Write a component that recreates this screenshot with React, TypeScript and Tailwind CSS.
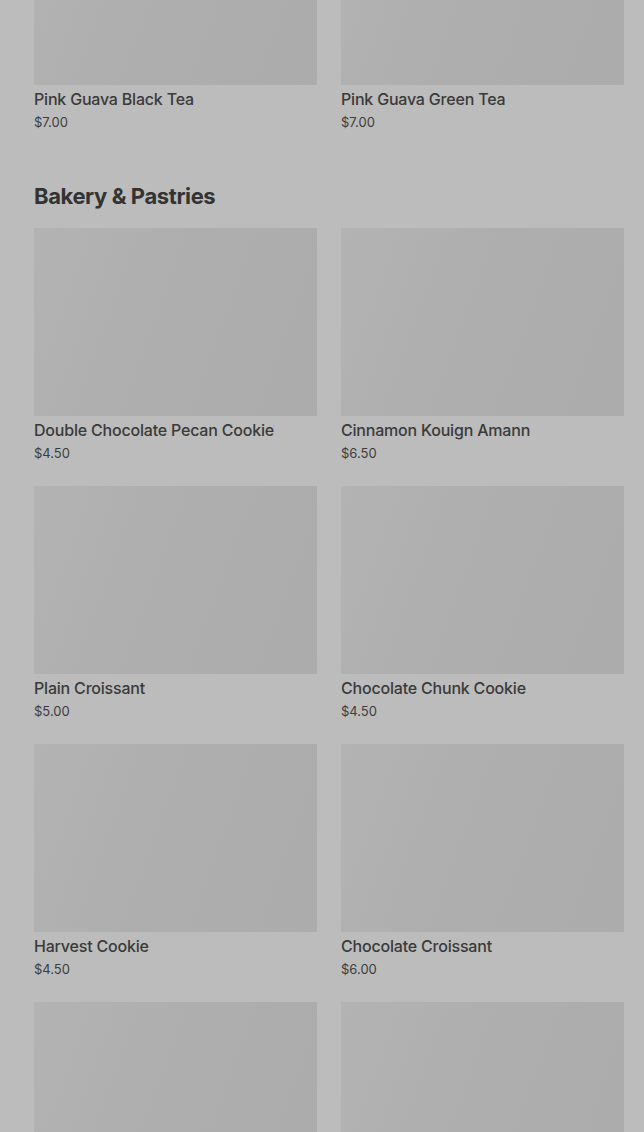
import React from "react";

type Item = { name: string; price: string };

const Card = ({ item }: { item?: Item }) => (
  <div className="flex flex-col">
    <div className="h-[188px] w-full bg-[linear-gradient(110deg,#b3b3b3_0%,#aeaeae_45%,#acacac_100%)]" />
    {item && (
      <>
        <div className="mt-[3px] text-[16px] leading-[22px] font-medium tracking-[-0.2px] text-[#3a3a3a]">{item.name}</div>
        <div className="mt-[2px] text-[13px] leading-[20px] text-[#3d3d3d]">{item.price}</div>
      </>
    )}
  </div>
);

const top: Item[] = [
  { name: "Pink Guava Black Tea", price: "$7.00" },
  { name: "Pink Guava Green Tea", price: "$7.00" },
];

const bakery: Item[] = [
  { name: "Double Chocolate Pecan Cookie", price: "$4.50" },
  { name: "Cinnamon Kouign Amann", price: "$6.50" },
  { name: "Plain Croissant", price: "$5.00" },
  { name: "Chocolate Chunk Cookie", price: "$4.50" },
  { name: "Harvest Cookie", price: "$4.50" },
  { name: "Chocolate Croissant", price: "$6.00" },
];

export default function App() {
  return (
    <div
      className="h-[1132px] w-[644px] overflow-hidden bg-[#bcbcbc]"
      style={{ fontFamily: "Inter, 'Noto Sans', sans-serif" }}
    >
      <div className="mt-[-103px] pl-[34px] pr-[20px]">
        <div className="grid grid-cols-2 gap-x-[24px] gap-y-[23px]">
          {top.map((it) => (
            <Card key={it.name} item={it} />
          ))}
        </div>
        <h2 className="mt-[50px] mb-[18px] text-[22px] leading-[28px] font-bold tracking-[-0.4px] text-[#333333]">
          Bakery &amp; Pastries
        </h2>
        <div className="grid grid-cols-2 gap-x-[24px] gap-y-[23px]">
          {bakery.map((it) => (
            <Card key={it.name} item={it} />
          ))}
          <Card />
          <Card />
        </div>
      </div>
    </div>
  );
}
